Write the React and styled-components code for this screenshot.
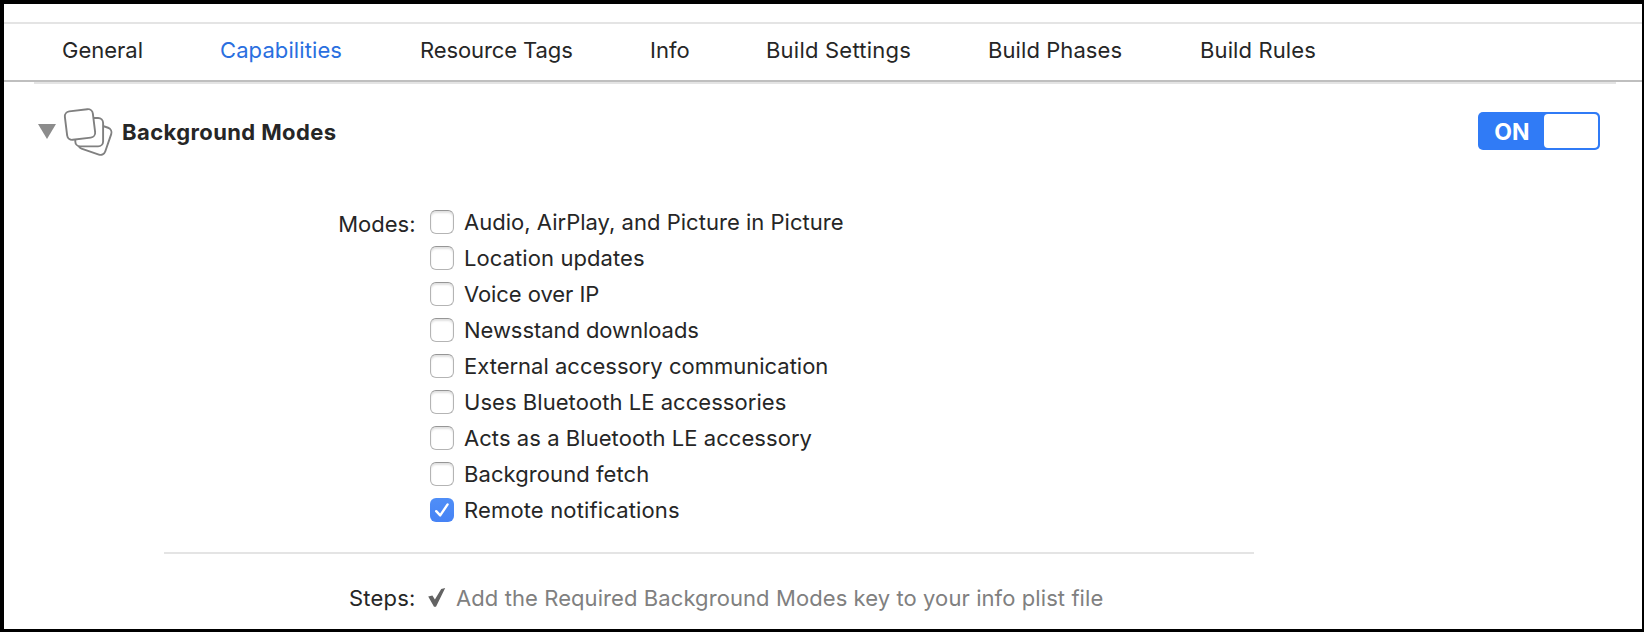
import React, { useState } from 'react';
import styled, { createGlobalStyle, css } from 'styled-components';

const GlobalStyle = createGlobalStyle`
  * {
    box-sizing: border-box;
  }

  body {
    margin: 0;
    background: #fff;
  }
`;

const Window = styled.main`
  display: flex;
  flex-direction: column;
  height: 632px;
  overflow: hidden;
  background: #fff;
  border: solid #000;
  border-width: 4px 2px 3px 4px;
  color: #262626;
  font-family: Inter, 'Liberation Sans', sans-serif;
  font-size: 22px;
`;

const TabBar = styled.nav`
  display: flex;
  height: 60px;
  margin-top: 18px;
  padding-left: 58px;
  border-top: 2px solid #e4e4e4;
  border-bottom: 2px solid #bfbfbf;
`;

const Tab = styled.button`
  flex: none;
  width: ${({ $width }) => $width}px;
  padding: 0 0 3px;
  border: none;
  background: none;
  color: ${({ $active }) => ($active ? '#2a6fdf' : '#262626')};
  font: inherit;
  line-height: 53px;
  letter-spacing: ${({ $tracking }) => $tracking || 0}px;
  text-align: left;
  white-space: nowrap;
  cursor: pointer;
`;

const Section = styled.section`
  margin: 0 26px 0 30px;
  border-top: 2px solid #e4e4e4;
`;

const SectionHeader = styled.header`
  display: flex;
  align-items: center;
  height: 94px;
  padding: 0 16px 0 4px;
`;

const SectionBody = styled.div`
  padding-top: 26px;
`;

const Disclosure = styled.svg`
  flex: none;
  width: 18px;
  height: 15px;
`;

const ModesIcon = styled.svg`
  flex: none;
  width: 52px;
  height: 52px;
  margin: 4px 0 0 6px;
`;

const Title = styled.h2`
  flex: 1;
  margin: 0 0 0 8px;
  padding-top: 2px;
  font-size: 22px;
  font-weight: 700;
  line-height: 36px;
  letter-spacing: 0.4px;
`;

const Switch = styled.button`
  display: flex;
  align-items: stretch;
  width: 122px;
  height: 38px;
  padding: 2px;
  border: none;
  border-radius: 5px;
  background: #307bf6;
  cursor: pointer;
`;

const SwitchLabel = styled.span`
  width: 64px;
  padding-top: 1px;
  color: #fff;
  font-family: Inter, sans-serif;
  font-size: 23px;
  font-weight: 650;
  line-height: 35px;
  text-align: center;
`;

const Knob = styled.span`
  flex: 1;
  border-radius: 4px;
  background: #fff;
`;

const Field = styled.div`
  display: grid;
  grid-template-columns: 381.5px 1fr;
  column-gap: 14.5px;
`;

const FieldLabel = styled.span`
  padding-top: ${({ $drop }) => $drop || 0}px;
  line-height: 36px;
  letter-spacing: ${({ $tracking }) => $tracking || 0}px;
  text-align: right;
`;

const ModeList = styled.div`
  display: flex;
  flex-direction: column;
`;

const ModeRow = styled.label`
  display: flex;
  align-items: center;
  gap: 10px;
  height: 36px;
  line-height: 36px;
  letter-spacing: ${({ $tracking }) => $tracking || 0}px;
  white-space: nowrap;
`;

const HiddenInput = styled.input`
  display: none;
`;

const CheckBox = styled.span`
  display: flex;
  flex: none;
  width: 24px;
  height: 24px;
  border: 1px solid #b4b4b4;
  border-top-color: #969696;
  border-radius: 6px;
  background: #fff;
  box-shadow: inset 0 2px 2px rgba(0, 0, 0, 0.12);

  ${({ $checked }) =>
    $checked &&
    css`
      border: none;
      background: linear-gradient(#4f8ef7, #4683f5);
      box-shadow: none;
    `}
`;

const Divider = styled.hr`
  width: 1090px;
  height: 2px;
  margin: 24px 0 26px 130px;
  border: none;
  background: #e4e4e4;
`;

const Step = styled.div`
  display: flex;
  align-items: center;
  gap: 10px;
  margin-left: -2px;
  color: #808080;
  line-height: 36px;
  letter-spacing: 0.085px;
  white-space: nowrap;
`;

const tabs = [
  { name: 'General', width: 158 },
  { name: 'Capabilities', width: 200, tracking: 0.1 },
  { name: 'Resource Tags', width: 230, tracking: -0.1 },
  { name: 'Info', width: 116 },
  { name: 'Build Settings', width: 222, tracking: 0.22 },
  { name: 'Build Phases', width: 212, tracking: 0.08 },
  { name: 'Build Rules', width: 140, tracking: 0.12 },
];

const modes = [
  { name: 'Audio, AirPlay, and Picture in Picture', tracking: 0.02 },
  { name: 'Location updates', tracking: 0.08 },
  { name: 'Voice over IP', tracking: -0.07 },
  { name: 'Newsstand downloads', tracking: -0.06 },
  { name: 'External accessory communication' },
  { name: 'Uses Bluetooth LE accessories', tracking: 0.05 },
  { name: 'Acts as a Bluetooth LE accessory', tracking: 0.06 },
  { name: 'Background fetch', tracking: 0.08 },
  { name: 'Remote notifications', tracking: 0.15 },
];

const StackedCards = () => (
  <ModesIcon viewBox="62 106 52 52" fill="#fff" stroke="#808080" strokeWidth="1.9">
    <rect x="80.6" y="123" width="28.4" height="28.4" rx="5" transform="rotate(19 94.8 137.2)" />
    <rect x="75.3" y="117" width="27.8" height="28.4" rx="5" />
    <rect x="65.9" y="109.2" width="28.2" height="28.6" rx="5" transform="rotate(-7 80 123.5)" />
  </ModesIcon>
);

const App = () => {
  const [activeTab, setActiveTab] = useState('Capabilities');
  const [selected, setSelected] = useState(['Remote notifications']);

  const toggleMode = (name) => {
    setSelected((current) =>
      current.includes(name) ? current.filter((item) => item !== name) : [...current, name]
    );
  };

  return (
    <>
      <GlobalStyle />
      <Window>
        <TabBar>
          {tabs.map((tab) => (
            <Tab
              key={tab.name}
              $width={tab.width}
              $tracking={tab.tracking}
              $active={tab.name === activeTab}
              onClick={() => setActiveTab(tab.name)}
            >
              {tab.name}
            </Tab>
          ))}
        </TabBar>
        <Section>
          <SectionHeader>
            <Disclosure viewBox="0 0 18 15">
              <path d="M0 0H18L9 15Z" fill="#8c8c8c" />
            </Disclosure>
            <StackedCards />
            <Title>Background Modes</Title>
            <Switch>
              <SwitchLabel>ON</SwitchLabel>
              <Knob />
            </Switch>
          </SectionHeader>
          <SectionBody>
            <Field>
              <FieldLabel $drop={2}>Modes:</FieldLabel>
              <ModeList>
                {modes.map((mode) => (
                  <ModeRow key={mode.name} $tracking={mode.tracking}>
                    <HiddenInput
                      type="checkbox"
                      checked={selected.includes(mode.name)}
                      onChange={() => toggleMode(mode.name)}
                    />
                    <CheckBox $checked={selected.includes(mode.name)}>
                      {selected.includes(mode.name) && (
                        <svg width="24" height="24" viewBox="0 0 24 24" fill="none">
                          <path
                            d="M6.2 13.2L10.2 17.4L17.6 6.4"
                            stroke="#fff"
                            strokeWidth="2.4"
                            strokeLinecap="round"
                            strokeLinejoin="round"
                          />
                        </svg>
                      )}
                    </CheckBox>
                    {mode.name}
                  </ModeRow>
                ))}
              </ModeList>
            </Field>
            <Divider />
            <Field>
              <FieldLabel $tracking={0.2}>Steps:</FieldLabel>
              <Step>
                <svg width="18" height="20" viewBox="0 0 18 20">
                  <path d="M0.2 8.6L4.4 7.4L6.9 11.4L13.2 1L17.2 0L8 18.8H6Z" fill="#636363" />
                </svg>
                Add the Required Background Modes key to your info plist file
              </Step>
            </Field>
          </SectionBody>
        </Section>
      </Window>
    </>
  );
};

export default App;
